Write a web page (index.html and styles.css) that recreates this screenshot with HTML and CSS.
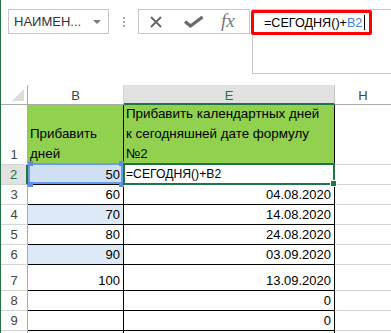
FILE: index.html
```html
<!DOCTYPE html>
<html lang="ru">
<head>
<meta charset="utf-8">
<title>Excel</title>
<link rel="stylesheet" href="styles.css">
</head>
<body>
<div class="app">
  <div class="toolbar">
    <div class="namebox"><span class="label">НАИМЕН...</span><span class="arrow"></span></div>
    <div class="dots"><i></i><i></i><i></i></div>
    <div class="buttons">
      <svg class="ic-x" width="12" height="12" viewBox="0 0 12 12"><path d="M1 1 L11 11 M11 1 L1 11" stroke="#6a6a6a" stroke-width="2" fill="none"/></svg>
      <svg class="ic-ok" width="20" height="12" viewBox="0 0 20 12"><path d="M1 5.5 L6.5 10 L18.5 1" stroke="#6a6a6a" stroke-width="3.2" fill="none" stroke-linejoin="miter"/></svg>
      <span class="fx">fx</span>
    </div>
    <div class="formula">
      <div class="hl">=СЕГОДНЯ()+<span class="ref">B2</span><span class="caret"></span></div>
    </div>
  </div>
  <div class="sheet">
    <div class="corner"><span class="tri"></span></div>
    <div class="ch">B</div>
    <div class="ch sel">E</div>
    <div class="ch h">H</div>

    <div class="rh">1</div>
    <div class="c green">Прибавить<br>дней</div>
    <div class="c green">Прибавить календартных дней<br>к сегодняшней дате формулу<br>№2</div>
    <div class="g"></div>

    <div class="rh sel">2</div>
    <div class="c num refcell">50<i class="sq tl"></i><i class="sq tr"></i><i class="sq bl"></i><i class="sq br"></i></div>
    <div class="c active">=СЕГОДНЯ()+B2</div>
    <div class="g"></div>

    <div class="rh">3</div>
    <div class="c num">60</div>
    <div class="c num">04.08.2020</div>
    <div class="g"></div>

    <div class="rh">4</div>
    <div class="c num blue">70</div>
    <div class="c num">14.08.2020</div>
    <div class="g"></div>

    <div class="rh">5</div>
    <div class="c num">80</div>
    <div class="c num">24.08.2020</div>
    <div class="g"></div>

    <div class="rh">6</div>
    <div class="c num blue">90</div>
    <div class="c num">03.09.2020</div>
    <div class="g"></div>

    <div class="rh">7</div>
    <div class="c num">100</div>
    <div class="c num">13.09.2020</div>
    <div class="g"></div>

    <div class="rh">8</div>
    <div class="c num"></div>
    <div class="c num">0</div>
    <div class="g"></div>

    <div class="rh">9</div>
    <div class="c num"></div>
    <div class="c num">0</div>
    <div class="g"></div>

    <div class="rh"></div>
    <div class="c"></div>
    <div class="c"></div>
    <div class="g"></div>
  </div>
</div>
</body>
</html>
```
FILE: styles.css
```css
* { box-sizing: border-box; margin: 0; padding: 0; }
html, body { background: #fff; }
body {
  width: 391px;
  height: 333px;
  overflow: hidden;
  font-family: "Liberation Sans", Arial, sans-serif;
  font-size: 13px;
  color: #000;
}
.app {
  border-left: 1px solid #217346;
  height: 333px;
  overflow: hidden;
}

/* toolbar */
.toolbar {
  height: 85px;
  display: flex;
  align-items: flex-start;
  padding-top: 9px;
}
.namebox {
  margin-left: 7px;
  width: 101px;
  height: 25px;
  flex-shrink: 0;
  border: 1px solid #c6c6c6;
  display: flex;
  align-items: center;
  padding-left: 5px;
  color: #333;
}
.namebox .label { flex: 1; }
.namebox .arrow {
  width: 0; height: 0;
  border-left: 4px solid transparent;
  border-right: 4px solid transparent;
  border-top: 4px solid #7a7a7a;
  margin-right: 7px;
}
.dots {
  margin-left: 14px;
  margin-top: 8px;
  display: flex;
  flex-direction: column;
  gap: 2px;
  flex-shrink: 0;
}
.dots i { display: block; width: 2px; height: 2px; background: #a8a8a8; }
.buttons {
  margin-left: 13px;
  width: 112px;
  height: 25px;
  flex-shrink: 0;
  border: 1px solid #c6c6c6;
  display: flex;
  align-items: center;
}
.ic-x { margin-left: 11px; }
.ic-ok { margin-left: 22px; }
.fx {
  margin-left: 17px;
  font-family: "Liberation Serif", "Times New Roman", serif;
  font-style: italic;
  font-size: 19px;
  color: #777;
  line-height: 1;
  margin-top: -2px;
}
.formula {
  margin-left: 2px;
  width: 150px;
  height: 65px;
  flex-shrink: 0;
  border: 1px solid #c6c6c6;
}
.hl {
  margin-left: -2px;
  width: 121px;
  height: 25px;
  border: 3px solid #ff0000;
  border-radius: 2px;
  display: flex;
  align-items: center;
  padding-left: 10px;
  font-size: 12.6px;
  white-space: nowrap;
}
.hl .ref { color: #4285d9; }
.hl .caret { display: inline-block; width: 1px; height: 15px; background: #000; margin-left: 2px; }

/* sheet */
.sheet {
  display: grid;
  grid-template-columns: 27px 96px 211px 57px;
  grid-template-rows: 20px 60px 20px 20px 20px 20px 20px 26px 20px 20px 20px;
}
.sheet > div {
  display: flex;
  align-items: flex-end;
  line-height: 19px;
  white-space: nowrap;
}
.corner {
  border-right: 1px solid #ababab;
  border-bottom: 1px solid #ababab;
  justify-content: flex-end;
  padding: 0 3px 3px 0;
}
.tri {
  width: 0; height: 0;
  border-left: 12px solid transparent;
  border-bottom: 12px solid #dcdcdc;
}
.sheet > .ch {
  justify-content: center;
  align-items: center;
  padding-top: 2px;
  color: #444;
  border-right: 1px solid #d4d4d4;
  border-bottom: 1px solid #ababab;
}
.sheet > .ch.sel {
  background: #e1e1e1;
  color: #217346;
  border-bottom: 2px solid #217346;
  border-right-color: #c6c6c6;
}
.rh {
  justify-content: center;
  color: #444;
  border-right: 1px solid #ababab;
  border-bottom: 1px solid #d4d4d4;
}
.rh.sel {
  background: #e1e1e1;
  color: #217346;
  border-right: 2px solid #217346;
}
.c {
  padding: 0 2px;
  border-right: 1px solid #000;
  border-bottom: 1px solid #000;
  position: relative;
}
.g {
  border-right: 1px solid #d4d4d4;
  border-bottom: 1px solid #d4d4d4;
}
.sheet > .green {
  background: #92d050;
  line-height: 20px;
  white-space: nowrap;
  font-size: 13.4px;
}
.num { justify-content: flex-end; padding-right: 3px; }
.blue { background: #dde9f6; }
.refcell { background: #cfe0f5; }
.refcell::before {
  content: "";
  position: absolute;
  left: 0; right: 0; top: -2px; bottom: 0;
  border: 2px solid #6a9be6;
}
.sq {
  position: absolute;
  width: 5px; height: 5px;
  background: #5b8fe3;
  z-index: 1;
}
.sq.tl { left: 0; top: -4px; }
.sq.tr { right: -1px; top: -4px; }
.sq.bl { left: 0; bottom: -3px; }
.sq.br { right: -1px; bottom: -3px; }
.active { font-size: 12.2px; }
.active::before {
  content: "";
  position: absolute;
  left: -1px; right: -1px; top: -2px; bottom: -1px;
  border: 2px solid #217346;
  z-index: 2;
}
.active::after {
  content: "";
  position: absolute;
  right: -2px; bottom: -2px;
  width: 5px; height: 5px;
  background: #217346;
  box-shadow: 0 0 0 1px #fff;
  z-index: 3;
}
```
